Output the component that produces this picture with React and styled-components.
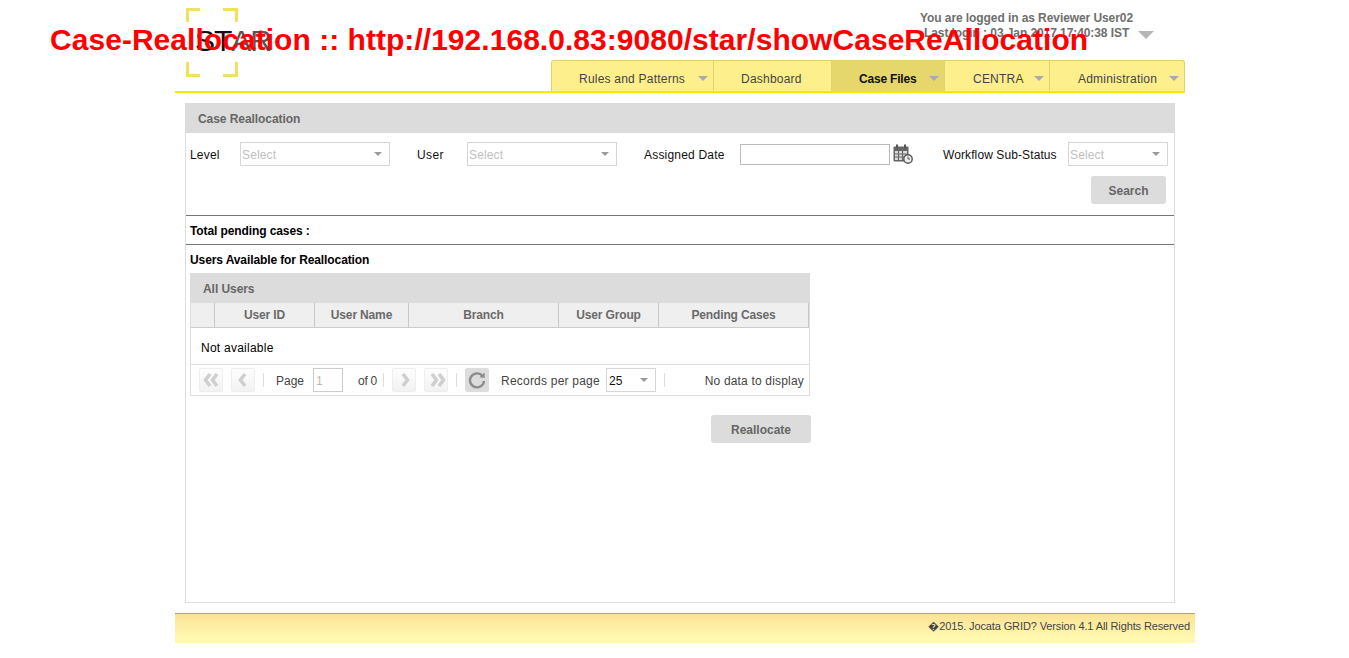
import React from "react";
import styled, { createGlobalStyle } from "styled-components";

const Global = createGlobalStyle`
  html, body { margin: 0; padding: 0; background: #fff; }
  body { font-family: "Liberation Sans", Arial, sans-serif; font-size: 12px; color: #000; }
  * { box-sizing: border-box; }
`;

const Page = styled.div`
  position: relative;
  width: 1349px;
  height: 658px;
  padding-left: 175px;
  overflow: hidden;
`;
const PageTitle = styled.div`
  position: absolute;
  left: 50px;
  top: 22px;
  font: bold 30px/36px "Liberation Sans", Arial, sans-serif;
  letter-spacing: 0.04px;
  color: #f00;
  white-space: nowrap;
  z-index: 5;
`;
const Header = styled.header`
  width: 1010px;
  height: 93px;
  border-bottom: 2px solid #f5e900;
  display: flex;
  justify-content: space-between;
  padding-left: 11px;
`;
const Logo = styled.div`
  position: relative;
  width: 85px;
  height: 69px;
  margin-top: 8px;
`;
const LogoFrame = styled.svg`
  display: block;
`;
const LogoText = styled.div`
  position: absolute;
  left: 9px;
  top: 17px;
  display: flex;
  font: 30px/32px "Liberation Sans", Arial, sans-serif;
  letter-spacing: -1px;
  color: #111;
`;
const LogoFade = styled.span`
  color: #555;
  font-weight: 400;
`;
const HeaderRight = styled.div`
  width: 634px;
  display: flex;
  flex-direction: column;
`;
const UserInfo = styled.div`
  height: 60px;
  padding: 11px 0 0 369px;
  font-weight: bold;
  font-size: 12px;
  line-height: 15px;
  letter-spacing: -0.08px;
  color: #6e6e6e;
  white-space: nowrap;
`;
const UserLine = styled.div`
  display: flex;
  align-items: center;
  padding-left: ${(p) => p.$indent || 0}px;
`;
const Tri = styled.span`
  display: inline-block;
  width: 0;
  height: 0;
  border-left: ${(p) => p.$w}px solid transparent;
  border-right: ${(p) => p.$w}px solid transparent;
  border-top: ${(p) => p.$h}px solid ${(p) => p.$c || "#aaa"};
  flex: none;
`;
const UserCaret = styled(Tri)`
  margin-left: 9px;
  margin-top: 2px;
`;
const Tabs = styled.nav`
  display: flex;
  height: 31px;
  background: #fdf08c;
  border: 1px solid #e2d069;
  border-bottom: 0;
  border-radius: 3px 3px 0 0;
`;
const Tab = styled.div`
  position: relative;
  width: ${(p) => p.$w}px;
  padding-left: ${(p) => p.$pad}px;
  display: flex;
  align-items: center;
  padding-top: 6px;
  color: ${(p) => (p.$active ? "#111" : "#444")};
  font-weight: ${(p) => (p.$active ? "bold" : "normal")};
  font-size: 12px;
  letter-spacing: ${(p) => (p.$active ? "-0.2px" : "0.22px")};
  white-space: nowrap;
  background: ${(p) => (p.$active ? "#e6d76c" : "transparent")};
  border-right: 1px solid #e2d069;
  &:last-child { border-right: 0; }
`;
const TabCaret = styled(Tri)`
  position: absolute;
  right: ${(p) => p.$r}px;
  top: 15px;
`;
const Panel = styled.main`
  width: 990px;
  height: 500px;
  margin: 10px 0 0 10px;
  border: 1px solid #ddd;
  border-top: 0;
`;
const TitleBar = styled.div`
  height: 30px;
  background: #dcdcdc;
  padding-left: 13px;
  font-weight: bold;
  font-size: 12px;
  line-height: 33px;
  letter-spacing: -0.06px;
  color: #666;
`;
const PanelTitle = styled(TitleBar)`
  margin: 0 -1px;
`;
const Filters = styled.div`
  display: flex;
  align-items: center;
  height: 24px;
  margin-top: 9px;
  padding-left: 4px;
`;
const Label = styled.label`
  width: ${(p) => p.$w}px;
  flex: none;
  padding-top: 2px;
  font-size: 12px;
  letter-spacing: ${(p) => p.$ls ?? 0.2}px;
  color: #111;
  white-space: nowrap;
`;
const SelectBox = styled.div`
  position: relative;
  width: ${(p) => p.$w}px;
  height: 24px;
  margin-right: ${(p) => p.$mr || 0}px;
  flex: none;
  border: 1px solid #d6d6d6;
  padding-left: ${(p) => p.$pl || 1}px;
  line-height: 24px;
  font-size: 12px;
  letter-spacing: 0.15px;
  color: ${(p) => p.$c || "#c0c0c0"};
  background: #fff;
`;
const SelectCaret = styled(Tri)`
  position: absolute;
  right: 7px;
  top: 9px;
`;
const DateInput = styled.div`
  width: 150px;
  height: 21px;
  flex: none;
  border: 1px solid #bbb;
`;
const CalIcon = styled.svg`
  margin: 0 30px 0 3px;
  flex: none;
  display: block;
`;
const ActionRow = styled.div`
  display: flex;
  justify-content: flex-end;
  padding-right: ${(p) => p.$pr || 0}px;
  margin-top: ${(p) => p.$mt}px;
  width: ${(p) => p.$width || "auto"};
`;
const Button = styled.div`
  width: ${(p) => p.$w}px;
  height: 28px;
  border-radius: 3px;
  background: #dcdcdc;
  color: #666;
  font-weight: bold;
  font-size: 12px;
  line-height: 31px;
  text-align: center;
`;
const Summary = styled.div`
  height: 29px;
  margin-top: ${(p) => p.$mt || 0}px;
  border-top: 1px solid #777;
  padding-left: 4px;
  font-weight: bold;
  font-size: 12px;
  line-height: 30px;
  letter-spacing: -0.1px;
  color: #000;
`;
const GridBox = styled.section`
  width: 620px;
  margin-left: 4px;
  border: 1px solid #ddd;
  border-top: 0;
`;
const GridTitle = styled(TitleBar)`
  margin: 0 -1px;
`;
const HeadRow = styled.div`
  display: flex;
  height: 25px;
  background: #efefef;
  border-bottom: 1px solid #ccc;
`;
const HeadCell = styled.div`
  width: ${(p) => p.$w}px;
  flex: none;
  border-right: 1px solid #c8c8c8;
  text-align: center;
  font-weight: bold;
  font-size: 12px;
  line-height: 25px;
  letter-spacing: -0.15px;
  color: #6a6a6a;
`;
const EmptyRow = styled.div`
  height: 36px;
  padding-left: 10px;
  font-size: 12px;
  line-height: 40px;
  letter-spacing: 0.25px;
  color: #000;
`;
const Pager = styled.div`
  display: flex;
  align-items: center;
  height: 31px;
  border-top: 1px solid #ddd;
  padding-left: 8px;
  font-size: 12px;
  color: #444;
`;
const PagerBtn = styled.div`
  width: 24px;
  height: 24px;
  flex: none;
  margin-right: ${(p) => p.$mr}px;
  border: 1px solid ${(p) => (p.$on ? "#dcdcdc" : "#eee")};
  border-radius: 2px;
  background: ${(p) => (p.$on ? "#dcdcdc" : "linear-gradient(#fdfdfd,#f2f2f2)")};
  display: flex;
  align-items: center;
  justify-content: center;
`;
const Sep = styled.span`
  width: 1px;
  height: 14px;
  flex: none;
  background: #ddd;
  margin-right: ${(p) => p.$mr}px;
`;
const PagerText = styled.span`
  flex: none;
  width: ${(p) => p.$w}px;
  padding-top: 1px;
  white-space: nowrap;
  letter-spacing: ${(p) => p.$ls || 0}px;
`;
const PageInput = styled.div`
  width: 30px;
  height: 24px;
  flex: none;
  margin-right: 15px;
  border: 1px solid #ccc;
  padding-left: 2px;
  line-height: 24px;
  color: #bbb;
`;
const NoData = styled.span`
  margin-left: auto;
  padding: 1px 5px 0 0;
  letter-spacing: 0.18px;
  white-space: nowrap;
`;
const Footer = styled.footer`
  width: 1020px;
  height: 30px;
  margin-top: 10px;
  border-top: 1px solid #b5a27a;
  background: linear-gradient(#fbe295, #fff9b0 85%);
  text-align: right;
  padding-right: 5px;
  font-size: 11px;
  line-height: 24px;
  color: #444;
  letter-spacing: -0.12px;
`;

const Chevron = ({ dir, double }) => {
  const one = dir === "left" ? "M9 3 L4.5 9 L9 15" : "M6 3 L10.5 9 L6 15";
  const two = dir === "left" ? "M16 3 L11.5 9 L16 15" : "M13 3 L17.5 9 L13 15";
  return (
    <svg width={double ? 20 : 15} height="18" viewBox={double ? "0 0 20 18" : "0 0 15 18"} fill="none" stroke="#cfcfcf" strokeWidth="3.6">
      <path d={one} />
      {double && <path d={two} />}
    </svg>
  );
};

const Refresh = () => (
  <svg width="18" height="18" viewBox="0 0 18 18" fill="none">
    <path d="M14.5 5 A7 7 0 1 0 16 10" stroke="#8c8c8c" strokeWidth="2.4" />
    <path d="M11.5 6.5 L16.8 6.8 L16.5 1.5 Z" fill="#8c8c8c" />
  </svg>
);

const Calendar = () => (
  <CalIcon width="20" height="20" viewBox="0 0 20 20">
    <rect x="0.5" y="2.5" width="15" height="15" rx="1" fill="#666" />
    <rect x="3" y="0.5" width="2" height="4" fill="#555" />
    <rect x="11" y="0.5" width="2" height="4" fill="#555" />
    <rect x="2" y="7" width="12" height="9" fill="#ddd" />
    <path d="M5.5 7v9M9.5 7v9M2 10h12M2 13h12" stroke="#666" strokeWidth="1.2" />
    <circle cx="15" cy="15" r="4.2" fill="#eee" stroke="#555" strokeWidth="1.4" />
    <path d="M15 12.6v2.4h2" stroke="#555" fill="none" />
  </CalIcon>
);

const Select = ({ w, mr, children, c, pl }) => (
  <SelectBox $w={w} $mr={mr} $c={c} $pl={pl}>
    {children}
    <SelectCaret $w={4.5} $h={4} $c="#9a9a9a" />
  </SelectBox>
);

const tabs = [
  { label: "Rules and Patterns", w: 162, pad: 27, caret: 5 },
  { label: "Dashboard", w: 118, pad: 27 },
  { label: "Case Files", w: 113, pad: 27, caret: 5, active: true },
  { label: "CENTRA", w: 105, pad: 28, caret: 5 },
  { label: "Administration", w: 134, pad: 28, caret: 5 },
];
const cols = [
  { w: 24 },
  { w: 100, t: "User ID" },
  { w: 94, t: "User Name" },
  { w: 150, t: "Branch" },
  { w: 100, t: "User Group" },
  { w: 150, t: "Pending Cases" },
];

export default function App() {
  return (
    <Page>
      <Global />
      <PageTitle>Case-Reallocation :: http://192.168.0.83:9080/star/showCaseReAllocation</PageTitle>
      <Header>
        <Logo>
          <LogoFrame width="53" height="69" viewBox="0 0 53 69" fill="none" stroke="#eee060" strokeWidth="3">
            <path d="M1.5 14V1.5H14M37 1.5H50.5V14M1.5 54V67.5H14M37 67.5H50.5V54" />
          </LogoFrame>
          <LogoText>
            ST<LogoFade>AR</LogoFade>
          </LogoText>
        </Logo>
        <HeaderRight>
          <UserInfo>
            <UserLine>You are logged in as Reviewer User02</UserLine>
            <UserLine $indent={4}>
              Last login : 03 Jan 2017 17:40:38 IST
              <UserCaret $w={8} $h={8} $c="#b5b5b5" />
            </UserLine>
          </UserInfo>
          <Tabs>
            {tabs.map((t) => (
              <Tab key={t.label} $w={t.w} $pad={t.pad} $active={t.active}>
                {t.label}
                {t.caret && <TabCaret $r={t.caret} $w={5.5} $h={5} $c="#aaa" />}
              </Tab>
            ))}
          </Tabs>
        </HeaderRight>
      </Header>
      <Panel>
        <PanelTitle>Case Reallocation</PanelTitle>
        <Filters>
          <Label $w={50}>Level</Label>
          <Select w={150} mr={27}>Select</Select>
          <Label $w={50} $ls={0.4}>User</Label>
          <Select w={150} mr={27}>Select</Select>
          <Label $w={96}>Assigned Date</Label>
          <DateInput />
          <Calendar />
          <Label $w={125} $ls={0.1}>Workflow Sub-Status</Label>
          <Select w={100}>Select</Select>
        </Filters>
        <ActionRow $pr={8} $mt={10}>
          <Button $w={75}>Search</Button>
        </ActionRow>
        <Summary $mt={11}>Total pending cases :</Summary>
        <Summary>Users Available for Reallocation</Summary>
        <GridBox>
          <GridTitle>All Users</GridTitle>
          <HeadRow>
            {cols.map((c, i) => (
              <HeadCell key={i} $w={c.w}>{c.t}</HeadCell>
            ))}
          </HeadRow>
          <EmptyRow>Not available</EmptyRow>
          <Pager>
            <PagerBtn $mr={8}><Chevron dir="left" double /></PagerBtn>
            <PagerBtn $mr={8}><Chevron dir="left" /></PagerBtn>
            <Sep $mr={12} />
            <PagerText $w={37}>Page</PagerText>
            <PageInput>1</PageInput>
            <PagerText $w={25} $ls={-0.25}>of 0</PagerText>
            <Sep $mr={8} />
            <PagerBtn $mr={8}><Chevron dir="right" /></PagerBtn>
            <PagerBtn $mr={8}><Chevron dir="right" double /></PagerBtn>
            <Sep $mr={8} />
            <PagerBtn $mr={12} $on><Refresh /></PagerBtn>
            <PagerText $w={105} $ls={0.22}>Records per page</PagerText>
            <Select w={50} mr={8} c="#111" pl={2}>25</Select>
            <Sep $mr={0} />
            <NoData>No data to display</NoData>
          </Pager>
        </GridBox>
        <ActionRow $mt={19} $width="625px">
          <Button $w={100}>Reallocate</Button>
        </ActionRow>
      </Panel>
      <Footer>�2015. Jocata GRID? Version 4.1 All Rights Reserved</Footer>
    </Page>
  );
}
